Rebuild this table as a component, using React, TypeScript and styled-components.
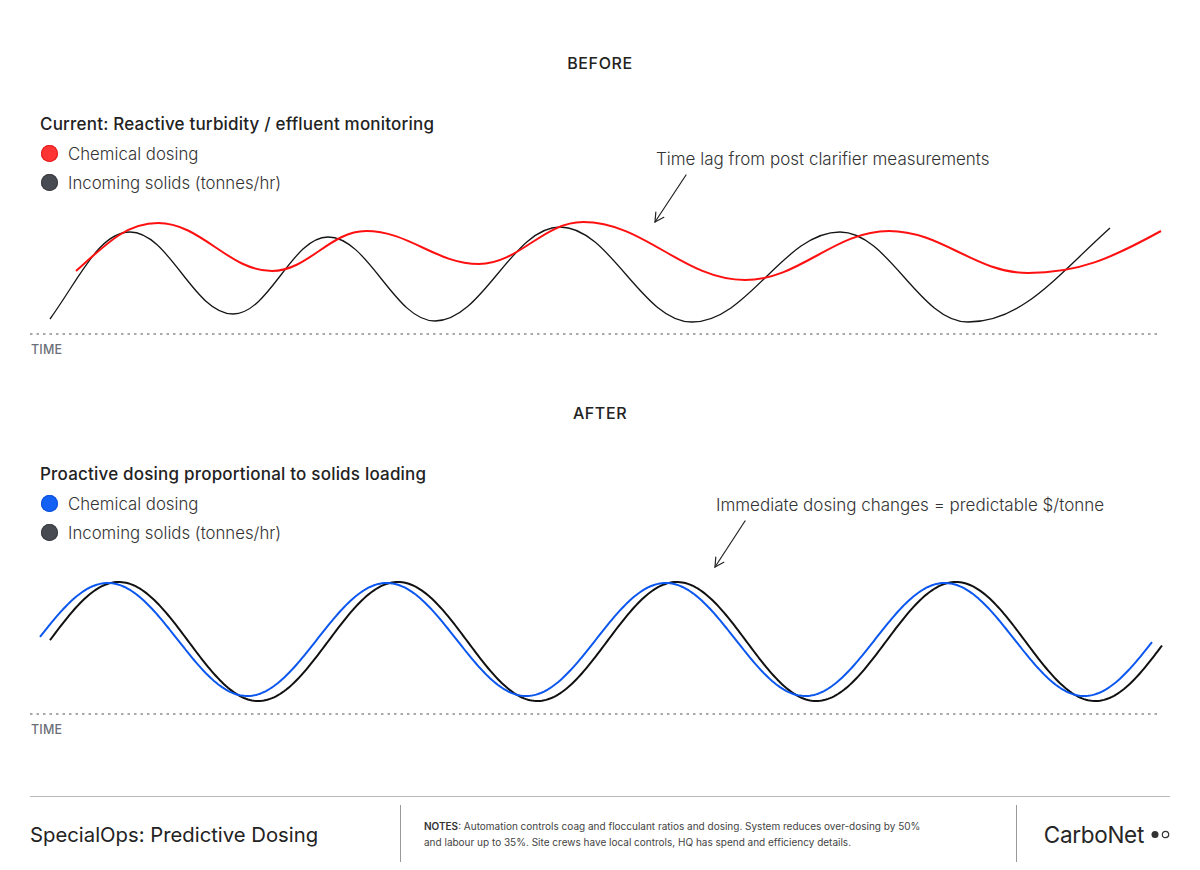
import styled, { createGlobalStyle } from "styled-components";

type Pt = [number, number, number?];

const GlobalStyle = createGlobalStyle`
  body {
    margin: 0;
    background: #fff;
    font-family: Inter, Roboto, "Liberation Sans", sans-serif;
    color: #222;
  }
`;

// cubic path through points; third value is the slope at that point (0 at peaks)
const smooth = (pts: Pt[], k = 0.38) => {
  let d = `M${pts[0][0]},${pts[0][1]}`;
  for (let i = 0; i < pts.length - 1; i++) {
    const [x0, y0, s0 = 0] = pts[i];
    const [x1, y1, s1 = 0] = pts[i + 1];
    const h = (x1 - x0) * k;
    d += ` C${x0 + h},${y0 + h * s0} ${x1 - h},${y1 - h * s1} ${x1},${y1}`;
  }
  return d;
};

const sine = (x0: number, x1: number, mid: number, amp: number, phase: number, period = 279) => {
  const out: string[] = [];
  for (let x = x0; x <= x1; x += 2) {
    const y = mid - amp * Math.sin((2 * Math.PI * (x - phase)) / period);
    out.push(`${x.toFixed(1)},${y.toFixed(2)}`);
  }
  return "M" + out.join(" L");
};

const beforeSolids = smooth([
  [50, 319, -1.4],
  [130, 232],
  [233, 314],
  [328, 237],
  [435, 321],
  [560, 227],
  [692, 322],
  [840, 232],
  [968, 322],
  [1110, 228, -0.9],
]);

const beforeDosing = smooth([
  [76, 271, -0.9],
  [158, 223],
  [272, 271],
  [366, 231],
  [479, 264],
  [583, 222],
  [745, 280],
  [889, 231],
  [1028, 273],
  [1161, 231, -0.55],
]);

const afterDosing = sine(40, 1152, 639.5, 56.5, 38);
const afterSolids = sine(50, 1162, 641.5, 59.5, 49);

const Page = styled.div`
  width: 1200px;
  padding-top: 53px;
  box-sizing: border-box;
`;

const Section = styled.section<{ $gap?: number }>`
  margin-top: ${(p) => p.$gap ?? 0}px;
  padding: 0 30px;
`;

const Heading = styled.h2`
  margin: 0;
  text-align: center;
  font-size: 16px;
  line-height: 20px;
  font-weight: 500;
  letter-spacing: 0.6px;
  color: #222;
`;

const ChartFrame = styled.div`
  margin-top: 40px;
  display: grid;
  & > * {
    grid-area: 1 / 1;
  }
`;

const HeaderRow = styled.div<{ $split: number }>`
  display: grid;
  grid-template-columns: ${(p) => p.$split}px 1fr;
  align-self: start;
`;

const Legend = styled.div`
  padding-left: 10px;
`;

const ChartTitle = styled.div`
  font-size: 17px;
  line-height: 22px;
  font-weight: 500;
  letter-spacing: 0.2px;
  color: #222;
  margin-bottom: 4px;
`;

const LegendItem = styled.div`
  display: flex;
  align-items: center;
  gap: 10px;
  height: 29px;
  padding-left: 1px;
  font-size: 16.8px;
  font-weight: 300;
  color: #333;
`;

const Dot = styled.span<{ $color: string; $edge: string }>`
  width: 17px;
  height: 17px;
  border-radius: 50%;
  background: ${(p) => p.$color};
  box-shadow: inset 0 0 0 1px ${(p) => p.$edge};
  flex-shrink: 0;
`;

const Annotation = styled.div<{ $top: number }>`
  padding-top: ${(p) => p.$top}px;
  font-size: 17px;
  line-height: 22px;
  font-weight: 300;
  color: #333;
  white-space: nowrap;
`;

const Canvas = styled.svg`
  display: block;
  overflow: visible;
`;

const TimeLabel = styled.div`
  margin-top: 2px;
  padding-left: 1px;
  font-size: 12.5px;
  line-height: 16px;
  font-weight: 500;
  letter-spacing: 0.2px;
  color: #6b7078;
`;

const Footer = styled.footer`
  margin: 58px 30px 0;
  border-top: 1px solid #b8b8b8;
  padding-top: 8px;
  display: grid;
  grid-template-columns: 370px 616px 1fr;
  height: 66px;
  box-sizing: border-box;
`;

const FooterCell = styled.div<{ $divider?: boolean; $end?: boolean }>`
  display: flex;
  align-items: center;
  justify-content: ${(p) => (p.$end ? "flex-end" : "flex-start")};
  border-left: ${(p) => (p.$divider ? "1px solid #999" : "none")};
  padding-left: ${(p) => (p.$divider && !p.$end ? "23px" : "0")};
  height: 57px;
`;

const FooterTitle = styled.div`
  font-size: 20.3px;
  font-weight: 400;
  color: #222;
  padding-top: 2px;
`;

const Notes = styled.p`
  margin: 0;
  font-size: 10px;
  line-height: 16px;
  color: #444;
  b {
    font-weight: 600;
    color: #333;
  }
`;

const Brand = styled.div`
  display: flex;
  align-items: center;
  gap: 7px;
  font-size: 22.5px;
  color: #262626;
  letter-spacing: -0.3px;
  padding-top: 2px;
`;

function Arrow({ from, to }: { from: [number, number]; to: [number, number] }) {
  const [x1, y1] = from;
  const [x2, y2] = to;
  const ang = Math.atan2(y1 - y2, x1 - x2);
  const len = 10;
  const spread = 0.5;
  const a = [x2 + len * Math.cos(ang - spread), y2 + len * Math.sin(ang - spread)];
  const b = [x2 + len * Math.cos(ang + spread), y2 + len * Math.sin(ang + spread)];
  return (
    <g stroke="#222" strokeWidth={1.2} fill="none" strokeLinecap="round">
      <line x1={x1} y1={y1} x2={x2} y2={y2} />
      <polyline points={`${a[0]},${a[1]} ${x2},${y2} ${b[0]},${b[1]}`} />
    </g>
  );
}

interface ChartProps {
  top: number;
  height: number;
  baseline: number;
  children: React.ReactNode;
}

function Chart({ top, height, baseline, children }: ChartProps) {
  return (
    <Canvas width={1140} height={height} viewBox={`30 ${top} 1140 ${height}`}>
      <line x1={30} y1={baseline} x2={1160} y2={baseline} stroke="#a9a9a9" strokeWidth={2} strokeDasharray="2.5 4" />
      {children}
    </Canvas>
  );
}

export default function App() {
  return (
    <Page>
      <GlobalStyle />
      <Section>
        <Heading>BEFORE</Heading>
        <ChartFrame>
          <Chart top={113} height={227} baseline={334}>
            <path d={beforeSolids} fill="none" stroke="#151515" strokeWidth={1.3} />
            <path d={beforeDosing} fill="none" stroke="#ff1010" strokeWidth={2} />
            <Arrow from={[686, 175]} to={[655, 222]} />
          </Chart>
          <HeaderRow $split={626}>
            <Legend>
              <ChartTitle>Current: Reactive turbidity / effluent monitoring</ChartTitle>
              <LegendItem>
                <Dot $color="#ff3434" $edge="#e01e1e" />
                Chemical dosing
              </LegendItem>
              <LegendItem>
                <Dot $color="#484b51" $edge="#3a3d42" />
                Incoming solids (tonnes/hr)
              </LegendItem>
            </Legend>
            <Annotation $top={35}>Time lag from post clarifier measurements</Annotation>
          </HeaderRow>
        </ChartFrame>
        <TimeLabel>TIME</TimeLabel>
      </Section>

      <Section $gap={45}>
        <Heading>AFTER</Heading>
        <ChartFrame>
          <Chart top={463} height={257} baseline={714}>
            <path d={afterSolids} fill="none" stroke="#111" strokeWidth={2} />
            <path d={afterDosing} fill="none" stroke="#0b57f0" strokeWidth={2} />
            <Arrow from={[745, 521]} to={[715, 567]} />
          </Chart>
          <HeaderRow $split={686}>
            <Legend>
              <ChartTitle>Proactive dosing proportional to solids loading</ChartTitle>
              <LegendItem>
                <Dot $color="#1360f5" $edge="#0d50d8" />
                Chemical dosing
              </LegendItem>
              <LegendItem>
                <Dot $color="#484b51" $edge="#3a3d42" />
                Incoming solids (tonnes/hr)
              </LegendItem>
            </Legend>
            <Annotation $top={31}>Immediate dosing changes = predictable $/tonne</Annotation>
          </HeaderRow>
        </ChartFrame>
        <TimeLabel>TIME</TimeLabel>
      </Section>

      <Footer>
        <FooterCell>
          <FooterTitle>SpecialOps: Predictive Dosing</FooterTitle>
        </FooterCell>
        <FooterCell $divider>
          <Notes>
            <b>NOTES</b>: Automation controls coag and flocculant ratios and dosing. System reduces over-dosing by 50%
            <br />
            and labour up to 35%. Site crews have local controls, HQ has spend and efficiency details.
          </Notes>
        </FooterCell>
        <FooterCell $divider $end>
          <Brand>
            CarboNet
            <svg width="19" height="9" viewBox="0 0 19 9">
              <circle cx="4" cy="4.5" r="3.5" fill="#333" />
              <circle cx="14.5" cy="4.5" r="3.2" fill="none" stroke="#333" strokeWidth="1.2" />
            </svg>
          </Brand>
        </FooterCell>
      </Footer>
    </Page>
  );
}
